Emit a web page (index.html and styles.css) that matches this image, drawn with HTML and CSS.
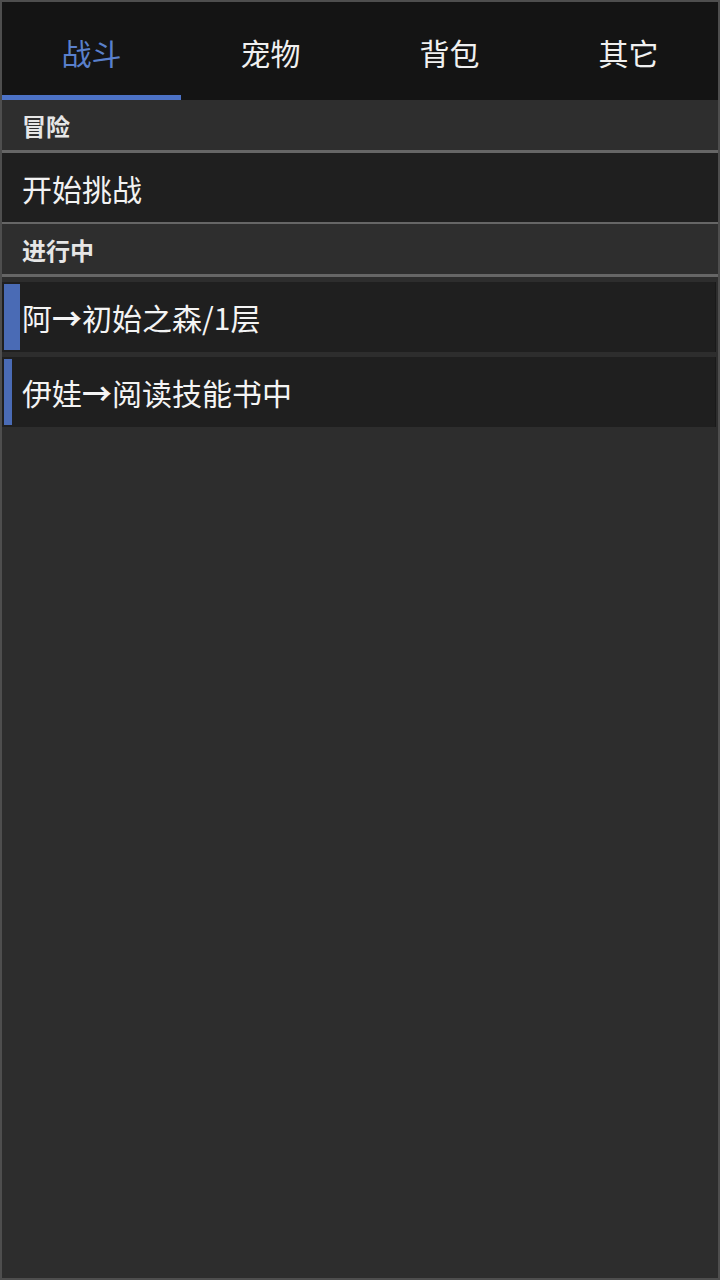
FILE: index.html
```html
<!DOCTYPE html>
<html lang="zh-CN">
<head>
<meta charset="utf-8">
<title>战斗</title>
<link rel="stylesheet" href="styles.css">
</head>
<body>
<div class="app">
  <nav class="tabs">
    <div class="tab active">战斗</div>
    <div class="tab">宠物</div>
    <div class="tab">背包</div>
    <div class="tab">其它</div>
  </nav>
  <div class="section-header">冒险</div>
  <div class="item">开始挑战</div>
  <div class="section-header">进行中</div>
  <div class="task-list">
    <div class="task">
      <div class="task-bar" style="width:16px"></div>
      <span class="task-text">阿<span class="arrow">→</span>初始之森/1层</span>
    </div>
    <div class="task">
      <div class="task-bar" style="width:8px"></div>
      <span class="task-text">伊娃<span class="arrow">→</span>阅读技能书中</span>
    </div>
  </div>
</div>
</body>
</html>
```
FILE: styles.css
```css
* { box-sizing: border-box; }
html, body { margin: 0; padding: 0; background: #2d2d2d; }
body {
  font-family: "Noto Sans CJK SC", "Noto Sans", sans-serif;
  color: #f2f2f2;
}
.app {
  width: 720px;
  height: 1280px;
  border: 2px solid #4e4e4e;
  background: #2d2d2d;
  display: flex;
  flex-direction: column;
}
.tabs {
  display: flex;
  height: 98px;
  background: #141414;
  flex-shrink: 0;
}
.tab {
  flex: 1;
  display: flex;
  align-items: center;
  justify-content: center;
  font-size: 30px;
  color: #f0f0f0;
  padding-top: 6px;
  border-bottom: 5px solid transparent;
}
.tab.active {
  color: #5a80cc;
  border-bottom-color: #4c72c6;
}
.section-header {
  height: 53px;
  padding-left: 20px;
  display: flex;
  align-items: center;
  font-size: 24px;
  font-weight: bold;
  color: #e6e6e6;
  background: #2e2e2e;
  border-bottom: 3px solid #666666;
  flex-shrink: 0;
}
.item {
  height: 71px;
  padding-left: 20px;
  display: flex;
  align-items: center;
  font-size: 30px;
  background: #1f1f1f;
  border-bottom: 2px solid #666666;
  flex-shrink: 0;
}
.task-list {
  display: flex;
  flex-direction: column;
  gap: 5px;
  padding-top: 5px;
  padding-right: 2px;
}
.task {
  position: relative;
  height: 70px;
  padding-left: 20px;
  display: flex;
  align-items: center;
  background: #1f1f1f;
  border-right: 1px solid #191919;
}
.task-bar {
  position: absolute;
  left: 2px;
  top: 2px;
  bottom: 2px;
  background: #4a6bb5;
}
.task-text {
  position: relative;
  font-size: 30px;
  color: #f4f4f4;
}
.arrow {
  font-weight: bold;
}
```
